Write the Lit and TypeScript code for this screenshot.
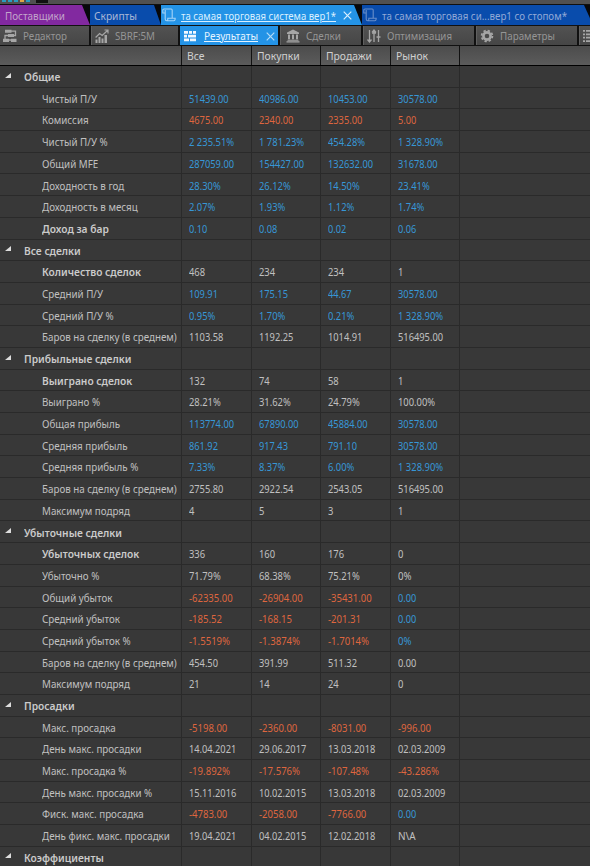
import { LitElement, html, css, svg, nothing } from "lit";
import { customElement } from "lit/decorators.js";
import { classMap } from "lit/directives/class-map.js";

type Row = [string, string, string?, boolean?];

const rows: Row[] = [
  ["Общие", "g"],
  ["Чистый П/У", "bbbb", "51439.00|40986.00|10453.00|30578.00"],
  ["Комиссия", "rrrr", "4675.00|2340.00|2335.00|5.00"],
  ["Чистый П/У %", "bbbb", "2 235.51%|1 781.23%|454.28%|1 328.90%"],
  ["Общий MFE", "bbbb", "287059.00|154427.00|132632.00|31678.00"],
  ["Доходность в год", "bbbb", "28.30%|26.12%|14.50%|23.41%"],
  ["Доходность в месяц", "bbbb", "2.07%|1.93%|1.12%|1.74%"],
  ["Доход за бар", "bbbb", "0.10|0.08|0.02|0.06", true],
  ["Все сделки", "g"],
  ["Количество сделок", "wwww", "468|234|234|1", true],
  ["Средний П/У", "bbbb", "109.91|175.15|44.67|30578.00"],
  ["Средний П/У %", "bbbb", "0.95%|1.70%|0.21%|1 328.90%"],
  ["Баров на сделку (в среднем)", "wwww", "1103.58|1192.25|1014.91|516495.00"],
  ["Прибыльные сделки", "g"],
  ["Выиграно сделок", "wwww", "132|74|58|1", true],
  ["Выиграно %", "wwww", "28.21%|31.62%|24.79%|100.00%"],
  ["Общая прибыль", "bbbb", "113774.00|67890.00|45884.00|30578.00"],
  ["Средняя прибыль", "bbbb", "861.92|917.43|791.10|30578.00"],
  ["Средняя прибыль %", "bbbb", "7.33%|8.37%|6.00%|1 328.90%"],
  ["Баров на сделку (в среднем)", "wwww", "2755.80|2922.54|2543.05|516495.00"],
  ["Максимум подряд", "wwww", "4|5|3|1"],
  ["Убыточные сделки", "g"],
  ["Убыточных сделок", "wwww", "336|160|176|0", true],
  ["Убыточно %", "wwww", "71.79%|68.38%|75.21%|0%"],
  ["Общий убыток", "rrrb", "-62335.00|-26904.00|-35431.00|0.00"],
  ["Средний убыток", "rrrb", "-185.52|-168.15|-201.31|0.00"],
  ["Средний убыток %", "rrrb", "-1.5519%|-1.3874%|-1.7014%|0%"],
  ["Баров на сделку (в среднем)", "wwww", "454.50|391.99|511.32|0.00"],
  ["Максимум подряд", "wwww", "21|14|24|0"],
  ["Просадки", "g"],
  ["Макс. просадка", "rrrr", "-5198.00|-2360.00|-8031.00|-996.00"],
  ["День макс. просадки", "wwww", "14.04.2021|29.06.2017|13.03.2018|02.03.2009"],
  ["Макс. просадка %", "rrrr", "-19.892%|-17.576%|-107.48%|-43.286%"],
  ["День макс. просадки %", "wwww", "15.11.2016|10.02.2015|13.03.2018|02.03.2009"],
  ["Фиск. макс. просадка", "rrrb", "-4783.00|-2058.00|-7766.00|0.00"],
  ["День фикс. макс. просадки", "wwww", "19.04.2021|04.02.2015|12.02.2018|N\\A"],
  ["Коэффициенты", "g"],
];

// Narrow figure advances, in em, used to size the value columns.
const advance: Record<string, number> = { ".": 0.217, "%": 0.818, "-": 0.4, " ": 0.274, N: 0.748, A: 0.645, "\\": 0.38 };
const valueWidth = (s: string) => [...s].reduce((sum, c) => sum + (advance[c] ?? 0.539), 0) * 9.95;

const icon = (body: unknown, cls = "") => html`<svg class="ic ${cls}" viewBox="0 0 14 14">${body}</svg>`;
const script = svg`<path d="M3.200 5H.8V2.200Q.8 1 2 1H9.200Q10.200 1 10.200 2.200V10M3.200 2V11Q3.200 12.800 4.800 12.800H11.800Q13.200 12.800 13.200 10.300H5.800V11.500Q5.800 12.800 4.500 12.800" fill="none" stroke="currentColor" stroke-width="1.100"/>`;
const editor = svg`<path d="M8 2.200h4.500v4.300H2v4.500h10" fill="none" stroke="currentColor" stroke-width="1.300"/><path d="M2 .8h6.500v3H2zM5 5h6v3H5zM0 9.800h6v3.200H0zM8 9.800h5.500v3.200H8z" fill="currentColor"/>`;
const chart = svg`<path d="M.6 8.500l4-4 2.600 2L13 1M9.500 1H13v3.500" fill="none" stroke="currentColor" stroke-width="1.200"/><path d="M.5 10.500h2V14h-2zM3.500 8h2v6h-2zM6.500 9.500h2V14h-2zM9.500 6h2.500v8H9.500z" fill="currentColor"/>`;
const bricks = svg`<path d="M0 2h4v2.800H0zM5 2h3v2.800H5zM9 2h3v2.800H9zM0 5.800h3v2.600H0zM4 5.800h8v2.600H4zM0 9.400h5v2.800H0zM6 9.400h6v2.800H6z" fill="currentColor"/>`;
const bank = svg`<path d="M7 .5l6 3v1.500H1V3.500zM2 5.600h2v4.600H2zM6 5.600h2v4.600H6zM10 5.600h2v4.600h-2zM1.500 10.800h11v1h-11zM.5 12.300h13v1.200H.5z" fill="currentColor"/>`;
const sliders = svg`<path d="M2.500 1v12M7 1v12M11.500 1v12M5 4h4M9.500 8h4M.5 10.500L2.500 13l2-2.500M5 3.500L7 1l2 2.500" fill="none" stroke="currentColor" stroke-width="1.300"/>`;
const gear = svg`<circle cx="7" cy="7" r="3.600" fill="none" stroke="currentColor" stroke-width="2.600"/><circle cx="7" cy="7" r="5.400" fill="none" stroke="currentColor" stroke-width="1.800" stroke-dasharray="2.300 1.941"/>`;
const list = svg`<path d="M0 1h2v1.800H0zM3 1h11v1.800H3zM0 4.400h2v1.800H0zM3 4.400h11v1.800H3zM0 7.800h2v1.800H0zM3 7.800h11v1.800H3zM0 11.200h2V13H0zM3 11.200h11V13H3z" fill="currentColor"/>`;
const cross = html`<svg class="x" viewBox="0 0 9 9"><path d="M.7.7l7.600 7.600M8.300.7L.7 8.300" stroke="currentColor" stroke-width="1.200"/></svg>`;

@customElement("app-root")
export class AppRoot extends LitElement {
  static styles = css`
    :host { display: block; width: 590px; height: 866px; overflow: hidden; background: #383838; color: #c0c0c0; font: 11px/14px "Noto Sans", "Open Sans", sans-serif; }
    * { box-sizing: border-box; }
    svg { display: block; flex: none; }
    .t { display: block; flex: none; width: max-content; white-space: nowrap; transform-origin: 0 50%; }
    .fit { flex: none; display: block; }
    .strip { height: 5px; background: #505050; border-bottom: 1px solid #101010; display: flex; align-items: flex-start; gap: 2px; padding-left: 2px; }
    .mark { width: 4px; height: 2px; background: #2a9cc0; }
    .orange { background: #e0a545; }
    .box { width: 12px; height: 3px; background: #111; margin-left: 4px; }
    .docs { height: 20px; background: #07080b; display: flex; }
    .doc { flex: none; height: 20px; display: flex; align-items: center; padding-top: 1px; }
    .purple { width: 90px; padding-left: 5px; background: #8229a0; color: #c3a5cb; clip-path: polygon(0 0, 82px 0, 100% 100%, 0 100%); }
    .blue { width: 71px; padding-left: 4px; background: #094cac; color: #a9b8d6; clip-path: polygon(0 0, 64px 0, 100% 100%, 0 100%); }
    .sel { width: 201px; padding-left: 1px; background: #2493e6; color: #d9efff; clip-path: polygon(0 0, 193px 0, 100% 100%, 0 100%); }
    .last { width: 231px; padding-left: 1px; background: #094cac; color: #91a9d6; clip-path: polygon(0 0, 222px 0, 100% 100%, 0 100%); }
    .doc .ic { margin: -1px 5px 0 0; opacity: .7; }
    .doc .x, .tab .x { margin-left: 7px; }
    .sel .t, .on .t { text-decoration: underline; }
    .ic { width: 14px; height: 14px; }
    .x { width: 9px; height: 9px; }
    .tabs { height: 21px; background: #111; display: grid; grid-template-columns: 89px 87px 98px 81px 111px 101px 20px; gap: 2px; padding: 1px 0; overflow: hidden; }
    .tab { display: flex; align-items: center; gap: 6px; background: linear-gradient(#525252, #464646); color: #959595; padding: 1px 0 0 3px; border-left: 1px solid #606060; }
    .tab .ic { color: #a6a6a6; }
    .tab:first-child { border: 0; }
    .on { background: #2493e6; color: #e5f4ff; border-color: #2493e6; }
    .on .ic { color: #f0f8ff; }
    .on .x { margin-left: 2px; opacity: .75; }
    .wide { padding-left: 5px; }
    .head, .row { display: grid; grid-template-columns: 182px 70px 69px 70px 69px 1fr; }
    .head { height: 20px; background: #0b0b0b; border-bottom: 1px solid #000; }
    .h { background: linear-gradient(#4c4c4c, #5b5b5b); border-right: 1px solid #111; padding: 3px 0 0 5px; color: #d0d0d0; }
    .h:last-child { border: 0; }
    .h .t { transform: scaleX(.94); }
    .row { height: 21.690px; }
    .cell { border-right: 1px solid #2a2a2a; border-bottom: 1px solid #2a2a2a; padding: 1.500px 0 0 7px; display: flex; align-items: center; min-width: 0; }
    .cell:last-child { border-right: 0; }
    .label { padding-left: 42px; }
    .label .t { transform: scaleX(.89); }
    .group .label { padding-left: 5px; gap: 13px; }
    .label.bold .t { transform: scaleX(.93); }
    .tri { width: 6px; height: 5px; margin-top: -4px; }
    .bold { font-weight: 600; color: #cbcbcb; }
    .b { color: #3797d6; } .r { color: #df663f; } .w { color: #c0c0c0; }
  `;

  // Condenses each fitted text to the width of its box.
  updated() {
    this.renderRoot.querySelectorAll<HTMLElement>(".fit").forEach((box) => {
      const text = box.firstElementChild as HTMLElement;
      const natural = text.getBoundingClientRect().width;
      if (natural) text.style.transform = `scaleX(${box.getBoundingClientRect().width / natural})`;
    });
  }

  render() {
    const t = (s: string) => html`<span class="t">${s}</span>`;
    const f = (s: string, w: number) => html`<span class="fit" style="width:${w}px">${t(s)}</span>`;
    return html`
      <div class="strip">
        <i class="mark"></i><i class="mark"></i><i class="mark"></i><i class="mark orange"></i><i class="mark"></i><i class="box"></i>
      </div>
      <div class="docs">
        <div class="doc purple">${f("Поставщики", 60)}</div>
        <div class="doc blue">${f("Скрипты", 43)}</div>
        <div class="doc sel">${icon(script)}${f("та самая торговая система вер1*", 155)}${cross}</div>
        <div class="doc last">${icon(script)}${f("та самая торговая си...вер1 со стопом*", 185)}</div>
      </div>
      <div class="tabs">
        <div class="tab">${icon(editor)}${f("Редактор", 44)}</div>
        <div class="tab">${icon(chart)}${f("SBRF:5M", 40)}</div>
        <div class="tab on">${icon(bricks)}${f("Результаты", 54)}${cross}</div>
        <div class="tab wide">${icon(bank)}${f("Сделки", 35)}</div>
        <div class="tab">${icon(sliders)}${f("Оптимизация", 65)}</div>
        <div class="tab">${icon(gear)}${f("Параметры", 55)}</div>
        <div class="tab">${icon(list)}</div>
      </div>
      <div class="head">${["", "Все", "Покупки", "Продажи", "Рынок", ""].map((s) => html`<div class="h">${t(s)}</div>`)}</div>
      ${rows.map(([name, kinds, vals, bold]) => {
        const group = kinds === "g";
        const v = vals ? vals.split("|") : ["", "", "", ""];
        return html`<div class=${classMap({ row: true, group })}>
          <div class=${classMap({ cell: true, label: true, bold: group || !!bold })}>
            ${group ? html`<svg class="tri" viewBox="0 0 6 5"><path d="M6 0v5H0z" fill="#ddd"/></svg>` : nothing}${t(name)}
          </div>
          ${v.map((s, i) => html`<div class="cell ${group ? "w" : kinds[i]}">${s ? f(s, valueWidth(s)) : nothing}</div>`)}
          <div class="cell"></div>
        </div>`;
      })}
    `;
  }
}
